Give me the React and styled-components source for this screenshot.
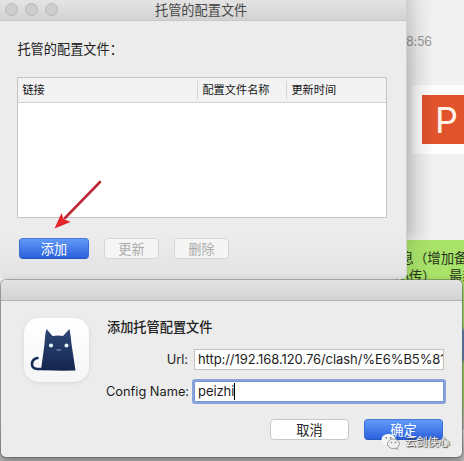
import React from "react";
import styled, { createGlobalStyle, css } from "styled-components";

const Global = createGlobalStyle`
  * { box-sizing: border-box; }
  body { margin: 0; overflow: hidden; font-family: Inter, "Noto Sans CJK SC", sans-serif; color: #1c1c1c; }
`;

const Desktop = styled.div`
  position: relative;
  width: 464px;
  height: 461px;
  overflow: hidden;
  background: #f1f1f1;
`;

const Chat = styled.div`
  display: flex;
  flex-direction: column;
  height: 461px;
  padding-left: 400px;
  background: linear-gradient(#f1f1f1 420px, #bdbdbd 450px);
`;

const Time = styled.div`
  height: 85px;
  padding: 34px 0 0 6px;
  font: 12.5px/16px Inter, sans-serif;
  letter-spacing: -0.2px;
  color: #999;
`;

const FileCard = styled.div`
  height: 69px;
  margin-left: 12px;
  padding: 10px 0 10px 10px;
  background: #fdfdfd;
  border-radius: 4px 0 0 4px;
`;

const FileIcon = styled.div`
  height: 49px;
  padding-left: 13px;
  background: #e0532d;
  color: #fff3e8;
  font: 36px/51px Inter, sans-serif;
`;

const Bubble = styled.div`
  margin-top: 86px;
  padding: 8px 0 0;
  height: 190px;
  background: linear-gradient(#a9e36a 0 86px, #5f83b8 92px 118px, #a2d566 124px 160px, #bdbdbd 185px);
  color: #26331c;
`;

const BubbleLine = styled.div`
  display: flex;
  margin-left: ${(p) => p.$shift || 0}px;
  font: 13.4px/18px "Noto Sans CJK SC", sans-serif;
  white-space: pre;
`;

const Window = styled.section`
  position: absolute;
  overflow: hidden;
  background: #ececec;
`;

const ListWindow = styled(Window)`
  left: 0;
  top: 0;
  width: 407px;
  height: 279px;
  border-right: 1px solid #cfcfcf;
  border-radius: 0 0 5px 5px;
  background: linear-gradient(#ececec 235px, #e2e2e2);
  box-shadow: none;
`;

const WindowShade = styled.div`
  position: absolute;
  left: 407px;
  top: 0;
  width: 26px;
  height: 280px;
  background: linear-gradient(to right, rgba(0, 0, 0, 0.2), rgba(0, 0, 0, 0.07) 45%, transparent);
  mask-image: linear-gradient(rgba(0, 0, 0, 0.6), #000 60px 230px, rgba(0, 0, 0, 0.4) 245px);
`;

const Dialog = styled(Window)`
  left: 1px;
  top: 280px;
  width: 461px;
  height: 177px;
  border-radius: 5px;
  box-shadow: 0 0 0 1px rgba(90, 90, 90, 0.45), 0 4px 10px rgba(0, 0, 0, 0.4);
`;

const TitleBar = styled.header`
  display: flex;
  align-items: center;
  height: 21px;
  padding-left: 5px;
  gap: 7px;
  border-bottom: 1px solid ${(p) => (p.$dark ? "#b3b3b3" : "#c8c8c8")};
  background: linear-gradient(#e4e4e4, #d2d2d2);
`;

const Light = styled.i`
  width: 13px;
  height: 13px;
  flex: none;
  margin-top: -1px;
  border: 1px solid #b8b8b8;
  border-radius: 50%;
  background: #cdcdcd;
`;

const Title = styled.h1`
  margin: -1px 0 0 90px;
  font: 13.2px/20px "Noto Sans CJK SC", sans-serif;
  color: #484848;
`;

const ListBody = styled.div`
  padding: 18px 0 0 17.4px;
`;

const Label = styled.div`
  height: 38px;
  font: 13.2px/20px "Noto Sans CJK SC", sans-serif;
  color: #202020;
`;

const Table = styled.div`
  width: 370px;
  height: 141px;
  border: 1px solid #c5c5c5;
  background: #fff;
`;

const TableHead = styled.div`
  display: grid;
  grid-template-columns: 179px 89px 1fr;
  align-items: center;
  height: 25px;
  background: #f2f2f2;
  border-bottom: 1px solid #d2d2d2;
`;

const HeadCell = styled.div`
  height: 18px;
  padding-left: 4px;
  font: 11.2px/17px "Noto Sans CJK SC", sans-serif;
  color: #151515;
  & + & { border-left: 1px solid #d4d4d4; }
`;

const Actions = styled.div`
  display: flex;
  gap: ${(p) => p.$gap}px;
  margin: ${(p) => p.$margin};
`;

const Button = styled.button`
  width: ${(p) => p.$width}px;
  height: 21px;
  padding: 0;
  border: 1px solid #c8c8c8;
  border-radius: 4px;
  background: #fff;
  font: 13.2px/17px "Noto Sans CJK SC", sans-serif;
  color: #222;
  ${(p) => p.$primary && css`
    border-color: #4779dc #3b6cd3 #2a55bd;
    background: linear-gradient(#6299f8, #2b61dd);
    color: #fff;
  `}
  &:disabled {
    border-color: #d5d5d5;
    background: #f5f5f5;
    color: #aaa;
  }
`;

const Arrow = styled.svg`
  position: absolute;
  left: 50px;
  top: 176px;
`;

const DialogBody = styled.div`
  display: grid;
  grid-template-columns: 64px 1fr;
  column-gap: 18px;
  padding: 17px 18px 0 23px;
`;

const AppIcon = styled.div`
  width: 65px;
  height: 64px;
  border-radius: 15px;
  background: linear-gradient(#fff, #f4f5f6);
  box-shadow: 0 1px 4px rgba(0, 0, 0, 0.09);
`;

const Heading = styled.h2`
  margin: 0 0 7px 1px;
  font: 500 13.2px/18px "Noto Sans CJK SC", sans-serif;
  color: #222;
`;

const Field = styled.label`
  display: grid;
  grid-template-columns: 82px 1fr;
  column-gap: 6px;
  align-items: center;
  height: 32px;
  font-size: 12.8px;
  text-align: right;
  white-space: nowrap;
`;

const Input = styled.span`
  display: flex;
  align-items: center;
  height: 21px;
  padding-left: 3px;
  overflow: hidden;
  border: 1px solid #c2c2c2;
  background: #fff;
  font-size: 13px;
  letter-spacing: -0.07px;
  ${(p) => p.$focused && css`
    border-color: #7594d6;
    box-shadow: 0 0 0 2px #8aa3da;
    border-radius: 1px;
  `}
`;

const Caret = styled.i`
  width: 1px;
  height: 17px;
  background: #000;
`;

const Watermark = styled.div`
  position: absolute;
  left: 381px;
  top: 431px;
  display: flex;
  align-items: center;
  gap: 5px;
  font: 11.2px/20px "Noto Sans CJK SC", sans-serif;
  color: #fafafa;
  text-shadow: 1px 1px 1px #333, 0 0 1px #555;
`;

function Cat() {
  return (
    <svg width="65" height="64" viewBox="0 0 65 64">
      <defs>
        <linearGradient id="fur" x1="0" y1="0" x2="0" y2="1">
          <stop offset="0" stopColor="#2d4776" />
          <stop offset="1" stopColor="#14264f" />
        </linearGradient>
      </defs>
      <path d="M13.5 40C7 41 5.5 50 13 51H22" fill="none" stroke="#172c57" strokeWidth="2.6" strokeLinecap="round" />
      <path d="M22.5 11L28.5 18Q34 17 39 18L45.5 11Q47 19 47.5 26L51.5 52.5Q34 53 17 52L20.5 26Q21 16 22.5 11Z" fill="url(#fur)" />
      <circle cx="27" cy="27.5" r="2" fill="#e8faff" />
      <circle cx="42.5" cy="27.5" r="2" fill="#e8faff" />
      <path d="M32.5 31.5Q33.8 33 34.8 31.7Q35.8 33 37 31.5" fill="none" stroke="#b8c9df" strokeWidth=".8" />
    </svg>
  );
}

function ChatLogo() {
  return (
    <svg width="19" height="17" viewBox="0 0 19 17">
      <path d="M7.5 1C3.5 1 .6 3.4.6 6.4c0 1.8 1 3.3 2.5 4.3l-.6 2 2.3-1.1c1 .3 2 .4 3.1.3 3.8 0 6.8-2.4 6.8-5.4S11.5 1 7.5 1Z" fill="#f5f6f7" />
      <path d="M12.5 6c-3.4 0-6 2.1-6 4.8s2.6 4.8 6 4.8c.8 0 1.5-.1 2.2-.3l1.9 1-.5-1.7c1.4-.9 2.3-2.3 2.3-3.8 0-2.7-2.6-4.8-5.9-4.8Z" fill="#f0f0f0" stroke="#777" strokeWidth=".7" />
      <g fill="#777"><circle cx="5.3" cy="4.8" r=".9" /><circle cx="9.7" cy="4.8" r=".9" /><circle cx="10.6" cy="9.5" r=".8" /><circle cx="14.5" cy="9.5" r=".8" /></g>
    </svg>
  );
}

export default function App() {
  return (
    <Desktop>
      <Global />
      <Chat>
        <Time>8:56</Time>
        <FileCard><FileIcon>P</FileIcon></FileCard>
        <Bubble>
          <BubbleLine $shift={0.5}>息（增加备</BubbleLine>
          <BubbleLine $shift={-4.5}><span>小传）</span><span>　最新</span></BubbleLine>
        </Bubble>
      </Chat>
      <WindowShade />
      <ListWindow>
        <TitleBar>
          <Light /><Light /><Light />
          <Title>托管的配置文件</Title>
        </TitleBar>
        <ListBody>
          <Label>托管的配置文件：</Label>
          <Table>
            <TableHead>
              <HeadCell>链接</HeadCell>
              <HeadCell>配置文件名称</HeadCell>
              <HeadCell>更新时间</HeadCell>
            </TableHead>
          </Table>
          <Actions $gap={15} $margin="20px 0 0 1.5px">
            <Button $primary $width={70}>添加</Button>
            <Button disabled $width={55}>更新</Button>
            <Button disabled $width={55}>删除</Button>
          </Actions>
        </ListBody>
        <Arrow width="56" height="58" viewBox="0 0 56 58">
          <path d="M50 6L15 42" stroke="#bd2a36" strokeWidth="2.6" strokeLinecap="round" />
          <path d="M4.5 52.5L11.5 37L13.5 43L20.5 46Z" fill="#e3252b" />
        </Arrow>
      </ListWindow>
      <Dialog>
        <TitleBar $dark />
        <DialogBody>
          <AppIcon><Cat /></AppIcon>
          <div>
            <Heading>添加托管配置文件</Heading>
            <Field>Url:<Input>http://192.168.120.76/clash/%E6%B5%81</Input></Field>
            <Field>Config Name:<Input $focused>peizhi<Caret /></Input></Field>
            <Actions $gap={15} $margin="12px 0 0 164px">
              <Button $width={79}>取消</Button>
              <Button $primary $width={79}>确定</Button>
            </Actions>
          </div>
        </DialogBody>
      </Dialog>
      <Watermark><ChatLogo />云剑侠心</Watermark>
    </Desktop>
  );
}
